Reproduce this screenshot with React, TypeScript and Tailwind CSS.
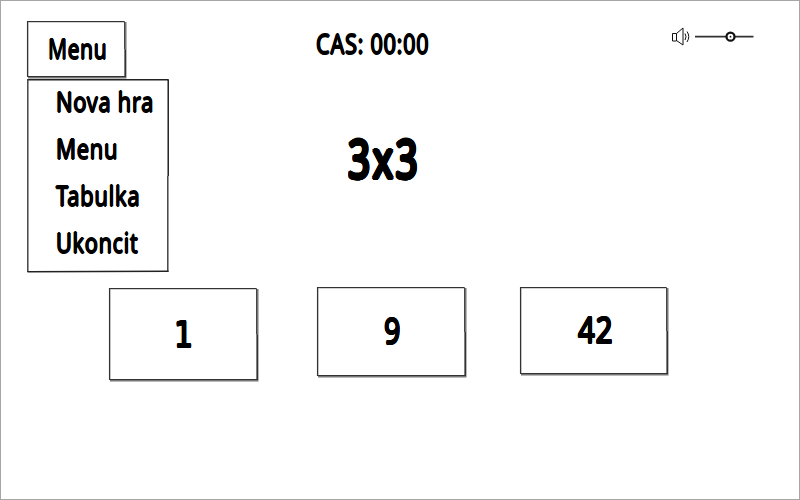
import { useLayoutEffect, useRef, useState } from "react";

type LabelProps = { text: string; width: number; className: string };

// Rings of offset copies thicken the strokes and round off their ends.
const PEN_SMALL =
  "text-[27px] tracking-[0.8px] [text-shadow:0.8px_0_0_#000,-0.8px_0_0_#000,0_0.6px_0_#000,0_-0.6px_0_#000]";
const PEN_MEDIUM =
  "tracking-[1px] [text-shadow:1px_0_0_#000,-1px_0_0_#000,0_0.8px_0_#000,0_-0.8px_0_#000,0.7px_0.6px_0_#000,-0.7px_0.6px_0_#000,0.7px_-0.6px_0_#000,-0.7px_-0.6px_0_#000]";
const PEN_LARGE =
  "text-[53px] tracking-[3.5px] [text-shadow:2px_0_0_#000,-2px_0_0_#000,0_1.6px_0_#000,0_-1.6px_0_#000,1.4px_1.1px_0_#000,-1.4px_1.1px_0_#000,1.4px_-1.1px_0_#000,-1.4px_-1.1px_0_#000,1.8px_0.6px_0_#000,-1.8px_0.6px_0_#000,1.8px_-0.6px_0_#000,-1.8px_-0.6px_0_#000,0.8px_1.5px_0_#000,-0.8px_1.5px_0_#000,0.8px_-1.5px_0_#000,-0.8px_-1.5px_0_#000]";

// Condensed hand-lettered text squeezed to a given width.
function Label({ text, width, className }: LabelProps) {
  const ref = useRef<HTMLSpanElement>(null);
  const [scale, setScale] = useState(1);
  useLayoutEffect(() => {
    if (ref.current) setScale(width / ref.current.offsetWidth);
  }, [text, width]);
  return (
    <span className="block whitespace-nowrap" style={{ width }}>
      <span
        ref={ref}
        className={`inline-block origin-left leading-none ${className}`}
        style={{ transform: `scaleX(${scale})` }}
      >
        {text}
      </span>
    </span>
  );
}

// Slightly uneven pencil outline with a grey shadow on the right and bottom.
function Frame({ w, h }: { w: number; h: number }) {
  return (
    <svg className="pointer-events-none absolute left-0 top-0 overflow-visible" width={w} height={h} fill="none">
      <path d={`M${w - 0.3} 1V${h - 0.3}H1`} stroke="#777" strokeWidth="1.6" />
      <path d={`M1 1.4H${w - 2}M1.5 1V${h - 2}`} stroke="#aaa" strokeWidth="0.6" />
      <path d={`M${w - 1.5} .5H.5V${h - 1.5}H${w - 1}`} stroke="#333" strokeWidth="1.1" />
      <path d={`M${w - 1.5} .5V${h / 2}`} stroke="#444" />
      <path d={`M${w - 0.8} ${h / 2}V${h - 1}`} stroke="#333" strokeWidth="1.6" />
    </svg>
  );
}

function MenuFrame() {
  return (
    <svg className="pointer-events-none absolute left-0 top-0 overflow-visible" width="142" height="194" fill="none">
      <path d="M0 .8H141.5" stroke="#222" strokeWidth="1.5" />
      <path d="M.8 0V193" stroke="#444" strokeWidth="1.5" />
      <path d="M141.2 .5V97" stroke="#000" strokeWidth="1.3" />
      <path d="M140.8 97V193" stroke="#444" strokeWidth="1.5" />
      <path d="M.5 192.8L141.5 192.2" stroke="#222" strokeWidth="1.4" />
    </svg>
  );
}

const menuItems = [
  { text: "Nova hra", width: 98 },
  { text: "Menu", width: 62 },
  { text: "Tabulka", width: 84 },
  { text: "Ukoncit", width: 82 },
];

export default function App() {
  return (
    <div className="flex h-[500px] w-[800px] flex-col overflow-hidden border border-[#a6a6a6] bg-white font-['Noto_Sans',sans-serif] text-black">
      <div className="flex h-[286px] items-start pl-[26px]">
        <div className="w-[142px] pt-5">
          <button className="relative flex h-[57px] w-[99px] items-center pl-[21px]">
            <Frame w={99} h={57} />
            <Label text="Menu" width={59} className={PEN_SMALL} />
          </button>
          <div className="relative mt-px flex h-[194px] w-[142px] flex-col pl-[29px]">
            <MenuFrame />
            {menuItems.map((item) => (
              <div key={item.text} className="flex h-[47px] items-center">
                <Label text={item.text} width={item.width} className={PEN_SMALL} />
              </div>
            ))}
          </div>
        </div>
        <div className="ml-[147px] flex w-[113px] flex-col pt-[29px]">
          <Label text="CAS: 00:00" width={113} className={PEN_SMALL} />
          <div className="mt-[71px] pl-8">
            <Label text="3x3" width={72} className={PEN_LARGE} />
          </div>
        </div>
        <div className="ml-[242px] flex items-center pt-[25px]">
          <svg width="84" height="22" viewBox="671 26 84 22" fill="none" stroke="#111">
            <path d="M672.5 33.5h4v7.5h-4zM676.5 33.5l6.5-5.5v17l-6.5-4.5" strokeWidth="1" />
            <path d="M685 33.5q2 3.2 0 6.5M687 31.5q3.5 5 0 10.5" strokeWidth="1" />
            <path d="M695 36.7h31M735 36.7h18.5" stroke="#333" strokeWidth="1.8" />
            <circle cx="730.5" cy="36.7" r="4" strokeWidth="2.3" />
            <circle cx="730.5" cy="36.7" r=".9" fill="#111" stroke="none" />
          </svg>
        </div>
      </div>
      <div className="flex items-start pl-[108px]">
        <div className="relative mt-px flex h-[93px] w-[149px] items-center pl-[65px]">
          <Frame w={149} h={93} />
          <Label text="1" width={20} className={`font-['DejaVu_Sans',sans-serif] text-[36px] ${PEN_MEDIUM}`} />
        </div>
        <div className="relative ml-[59px] flex h-[90px] w-[149px] items-center pb-[3px] pl-[67px]">
          <Frame w={149} h={90} />
          <Label text="9" width={17} className={`text-[37px] ${PEN_MEDIUM}`} />
        </div>
        <div className="relative ml-[54px] flex h-[88px] w-[148px] items-center pb-[3px] pl-[58px]">
          <Frame w={148} h={88} />
          <Label text="42" width={35} className={`text-[37px] ${PEN_MEDIUM}`} />
        </div>
      </div>
    </div>
  );
}
